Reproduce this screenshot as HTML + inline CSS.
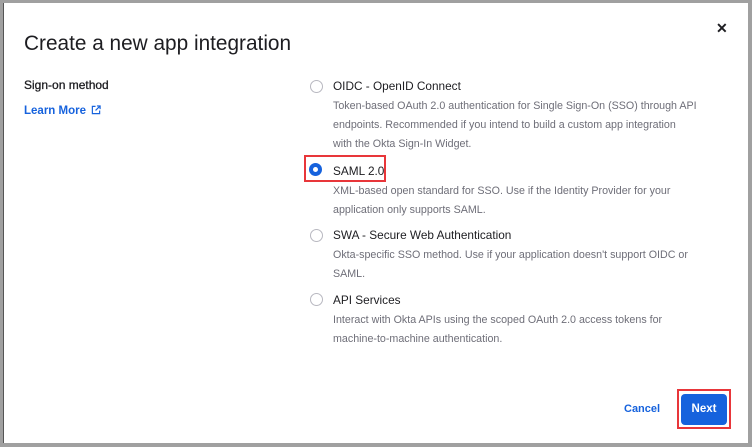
<!DOCTYPE html>
<html><head><style>
html,body{margin:0;padding:0;}
body{width:752px;height:447px;background:#a0a0a0;position:relative;overflow:hidden;font-family:"Liberation Sans",sans-serif;}
#m{position:absolute;left:3px;top:3px;width:745px;height:440px;background:#fff;border-left:1px solid #555;box-sizing:border-box;}
.a{position:absolute;white-space:nowrap;}
.t{font-size:11.8px;color:#1d1d21;}
.d{font-size:10.7px;color:#6e6e78;}
.r{position:absolute;width:11px;height:11px;border:1px solid #b8b8c0;border-radius:50%;left:310px;}
</style></head><body>
<div id="m"></div>
<div class="a" style="left:24px;top:32px;font-size:20.8px;color:#1d1d21;">Create a new app integration</div>
<div class="a" style="left:716px;top:20px;font-size:14px;font-weight:bold;color:#1d1d21;">✕</div>
<div class="a" style="left:24px;top:78px;font-size:12px;color:#1d1d21;-webkit-text-stroke:0.3px #1d1d21;">Sign-on method</div>
<div class="a" style="left:24px;top:105px;font-size:11.5px;font-weight:bold;color:#1662dd;">Learn More
<svg width="10" height="10" viewBox="0 0 11 11" style="vertical-align:-1px;margin-left:2px"><path d="M5 1.5H1.5v8h8V6M6.5 1h3.5v3.5M10 1L5 6" fill="none" stroke="#1662dd" stroke-width="1.3"/></svg></div>

<div class="r" style="top:80px;"></div>
<div class="a t" style="left:333px;top:79px;">OIDC - OpenID Connect</div>
<div class="a d" style="left:333px;top:97px;line-height:19px;">Token-based OAuth 2.0 authentication for Single Sign-On (SSO) through API<br>endpoints. Recommended if you intend to build a custom app integration<br>with the Okta Sign-In Widget.</div>

<div class="a" style="left:304px;top:155px;width:78px;height:23px;border:2px solid #e8363a;"></div>
<div class="a" style="left:309px;top:163px;width:13px;height:13px;border-radius:50%;background:#1662dd;"></div>
<div class="a" style="left:313px;top:167px;width:5px;height:5px;border-radius:50%;background:#fff;"></div>
<div class="a t" style="left:333px;top:164px;">SAML 2.0</div>
<div class="a d" style="left:333px;top:182px;line-height:19px;">XML-based open standard for SSO. Use if the Identity Provider for your<br>application only supports SAML.</div>

<div class="r" style="top:229px;"></div>
<div class="a t" style="left:333px;top:228px;">SWA - Secure Web Authentication</div>
<div class="a d" style="left:333px;top:246px;line-height:19px;">Okta-specific SSO method. Use if your application doesn't support OIDC or<br>SAML.</div>

<div class="r" style="top:293px;"></div>
<div class="a t" style="left:333px;top:293px;">API Services</div>
<div class="a d" style="left:333px;top:311px;line-height:19px;">Interact with Okta APIs using the scoped OAuth 2.0 access tokens for<br>machine-to-machine authentication.</div>

<div class="a" style="left:624px;top:403px;font-size:11px;font-weight:bold;color:#1662dd;">Cancel</div>
<div class="a" style="left:677px;top:389px;width:50px;height:36px;border:2px solid #e8363a;"></div>
<div class="a" style="left:681px;top:394px;width:46px;height:31px;border-radius:4px;background:#1662dd;color:#fff;font-size:11.5px;font-weight:bold;text-align:center;line-height:31px;">Next</div>
</body></html>
